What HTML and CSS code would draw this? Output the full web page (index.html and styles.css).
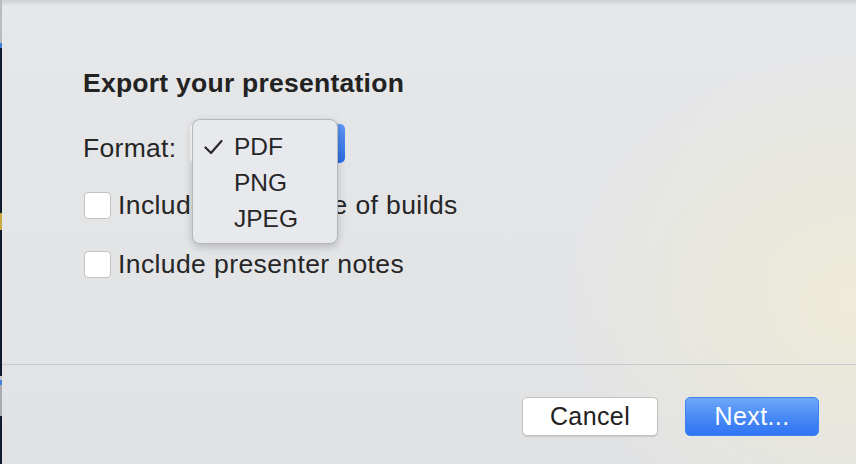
FILE: index.html
```html
<!DOCTYPE html>
<html>
<head>
<meta charset="utf-8">
<link rel="stylesheet" href="styles.css">
</head>
<body>
<div class="app">
  <div class="strip">
    <span class="s-gray1"></span><span class="s-blue1"></span><span class="s-dark1"></span><span class="s-yellow"></span><span class="s-dark2"></span><span class="s-light"></span><span class="s-blue2"></span><span class="s-gray2"></span><span class="s-dark3"></span>
  </div>
  <div class="dialog">
    <div class="topshade"></div>
    <div class="content">
      <h1 class="title">Export your presentation</h1>
      <div class="format-row">
        <span class="label">Format:</span>
        <div class="select">
          <span class="select-face"></span><span class="select-arrows"></span>
          <div class="menu">
            <div class="menu-item"><span class="check"><svg width="19" height="16" viewBox="0 0 19 16"><polyline points="1.5,8.5 7,14 17.5,2" fill="none" stroke="#2a2a2a" stroke-width="2.2" stroke-linecap="round" stroke-linejoin="round"/></svg></span>PDF</div>
            <div class="menu-item"><span class="check"></span>PNG</div>
            <div class="menu-item"><span class="check"></span>JPEG</div>
          </div>
        </div>
      </div>
      <label class="check-row first"><span class="box"></span><span class="ctext">Include each stage of builds</span></label>
      <label class="check-row second"><span class="box"></span><span class="ctext">Include presenter notes</span></label>
    </div>
    <div class="footer">
      <button class="btn cancel">Cancel</button>
      <button class="btn next">Next...</button>
    </div>
  </div>
</div>
</body>
</html>
```
FILE: styles.css
```css
html, body {
  margin: 0;
  padding: 0;
}
body {
  width: 856px;
  height: 464px;
  overflow: hidden;
  font-family: "Liberation Sans", Arial, sans-serif;
  color: #262626;
}
.app {
  display: flex;
  height: 464px;
}
.strip {
  width: 2px;
  display: flex;
  flex-direction: column;
  background: #0f1a2c;
}
.strip span { display: block; width: 2px; }
.s-gray1 { height: 43px; background: #b9bbbf; }
.s-blue1 { height: 5px; background: #3f7fe0; }
.s-dark1 { height: 165px; background: #0f1a2c; }
.s-yellow { height: 17px; background: #c9a93c; }
.s-dark2 { height: 146px; background: #0f1a2c; }
.s-light { height: 4px; background: #c4c6ca; }
.s-blue2 { height: 5px; background: #3f7fe0; }
.s-gray2 { height: 31px; background: #a9abaf; }
.s-dark3 { flex: 1; background: #0f1a2c; }

.dialog {
  flex: 1;
  display: flex;
  flex-direction: column;
  position: relative;
  background:
    radial-gradient(ellipse 420px 360px at 100% 65%, rgba(240, 236, 214, 0.9), rgba(240, 236, 214, 0) 70%),
    linear-gradient(180deg, #e6e7e9 0%, #e1e2e4 100%);
}
.topshade {
  position: absolute;
  left: 0; right: 0; top: 0;
  height: 6px;
  background: linear-gradient(180deg, #cfd0d2 0%, #d9dadc 50%, rgba(225,226,228,0) 100%);
}
.content {
  height: 365px;
  border-bottom: 1px solid #c9cacc;
  padding: 67px 0 0 81px;
  box-sizing: border-box;
}
.title {
  margin: 0;
  font-size: 26.5px;
  line-height: 32px;
  font-weight: bold;
  letter-spacing: 0.25px;
  color: #222;
}
.format-row {
  display: flex;
  align-items: flex-start;
  margin-top: 25px;
  height: 39px;
}
.label {
  flex: 0 0 107px;
  margin-top: 9px;
  font-size: 26.5px;
  line-height: 30px;
  letter-spacing: 0.3px;
  color: #262626;
}
.select {
  position: relative;
  width: 155px;
  height: 39px;
  border-radius: 5px;
  background: #fff;
  display: flex;
}
.select-face { flex: 1; }
.select-arrows {
  width: 24px;
  border-radius: 0 5px 5px 0;
  background: linear-gradient(180deg, #5d98f6, #2c6de6);
}
.menu {
  position: absolute;
  left: 2px;
  top: -5px;
  width: 146px;
  height: 125px;
  box-sizing: border-box;
  padding-top: 9px;
  border-radius: 8px;
  background: #e8e9ed;
  border: 1px solid #b6b7bb;
  box-shadow: 0 3px 8px rgba(0,0,0,0.2);
}
.menu-item {
  display: flex;
  align-items: center;
  height: 36px;
  font-size: 24.5px;
  color: #262626;
}
.check {
  flex: 0 0 41px;
  display: flex;
  align-items: center;
  padding-left: 11px;
  box-sizing: border-box;
  height: 36px;
}
.check svg { display: block; margin-top: -1px; }
.check-row {
  display: flex;
  align-items: center;
  gap: 7px;
  height: 27px;
  font-size: 26.5px;
  letter-spacing: 0.4px;
  color: #262626;
}
.check-row.first { margin-top: 29px; }
.check-row.second { margin-top: 32px; }
.ctext { line-height: 27px; }
.box {
  flex: 0 0 auto;
  width: 25px;
  height: 25px;
  margin-left: 1px;
  border: 1px solid #c3c3c5;
  border-radius: 4px;
  background: #fff;
}
.footer {
  display: flex;
  justify-content: flex-end;
  gap: 27px;
  padding: 32px 37px 0 0;
}
.btn {
  font-family: "Liberation Sans", Arial, sans-serif;
  font-size: 25px;
  letter-spacing: 0.4px;
  height: 39px;
  border-radius: 5px;
  padding: 0;
  margin: 0;
}
.cancel {
  width: 136px;
  background: #fff;
  color: #222;
  border: 1px solid #c2c2c4;
  box-shadow: 0 1px 1px rgba(0,0,0,0.12);
}
.next {
  width: 134px;
  color: #fff;
  border: 1px solid #3f80ee;
  background: linear-gradient(180deg, #6ea8f8 0%, #4a8bf6 50%, #2f74f4 100%);
}
```
